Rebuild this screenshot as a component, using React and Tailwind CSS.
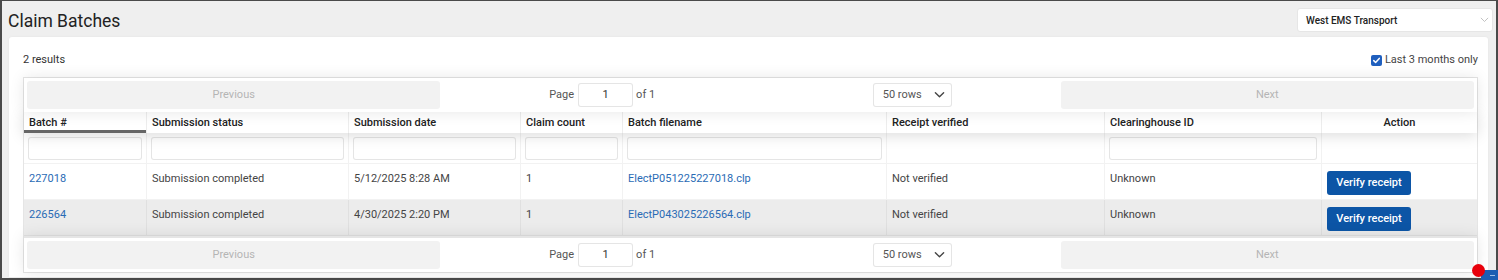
import React from "react";

const cols = [
  { key: "batch", label: "Batch #", w: "w-[123px]", filter: true },
  { key: "status", label: "Submission status", w: "w-[202px]", filter: true },
  { key: "date", label: "Submission date", w: "w-[172px]", filter: true },
  { key: "count", label: "Claim count", w: "w-[102px]", filter: true },
  { key: "file", label: "Batch filename", w: "w-[264px]", filter: true },
  { key: "receipt", label: "Receipt verified", w: "w-[218px]", filter: false },
  { key: "ch", label: "Clearinghouse ID", w: "w-[217px]", filter: true },
  { key: "action", label: "Action", w: "w-[155px]", filter: false },
];

const rows = [
  {
    batch: "227018",
    status: "Submission completed",
    date: "5/12/2025 8:28 AM",
    count: "1",
    file: "ElectP051225227018.clp",
    receipt: "Not verified",
    ch: "Unknown",
  },
  {
    batch: "226564",
    status: "Submission completed",
    date: "4/30/2025 2:20 PM",
    count: "1",
    file: "ElectP043025226564.clp",
    receipt: "Not verified",
    ch: "Unknown",
  },
];

function Chevron({ className, stroke = "#333", sw = 1.6 }) {
  return (
    <svg className={className} viewBox="0 0 12 8" fill="none">
      <path d="M1.5 1.5 L6 6 L10.5 1.5" stroke={stroke} strokeWidth={sw} strokeLinecap="round" strokeLinejoin="round" />
    </svg>
  );
}

function Pagination({ top }) {
  return (
    <div
      className={
        "flex p-[3px] bg-white relative z-10 shadow-[0_0_15px_0_rgba(0,0,0,0.1)] " +
        (top ? "h-[34px]" : "border-t-2 border-[rgba(0,0,0,0.1)] h-[36px]")
      }
    >
      <button className="flex-[2] h-[28px] rounded-[3px] bg-[#f2f2f2] text-[11px] text-[#b5b5b5] flex items-center justify-center">
        Previous
      </button>
      <div className="flex-[3] flex items-center justify-around text-[11px] text-[#555]">
        <div className="flex items-center">
          <span>Page</span>
          <div className="ml-[4px] mr-[3px] w-[55px] h-[24px] border border-[rgba(0,0,0,0.1)] rounded-[3px] bg-white flex items-center justify-center text-[#333]">
            1
          </div>
          <span>of 1</span>
        </div>
        <div className="w-[79px] h-[24px] border border-[rgba(0,0,0,0.1)] rounded-[3px] bg-white flex items-center justify-between pl-[9px] pr-[6px] text-[#555]">
          <span>50 rows</span>
          <Chevron className="w-[11px] h-[8px]" stroke="#444" sw={1.5} />
        </div>
      </div>
      <button className="flex-[2] h-[28px] rounded-[3px] bg-[#f2f2f2] text-[11px] text-[#b5b5b5] flex items-center justify-center">
        Next
      </button>
    </div>
  );
}

export default function App() {
  return (
    <div className="relative w-[1498px] h-[280px] font-['Roboto',sans-serif]">
      <div className="w-full h-full bg-[#efefef] border-t border-l-2 border-r-2 border-b-2 border-[#4a4a4a] flex flex-col">
        {/* Header bar */}
        <div className="h-[36px] flex items-center justify-between shrink-0">
          <h1 className="pl-[6px] text-[17.5px] leading-none text-[#222] pt-[5px]">Claim Batches</h1>
          <div className="mr-[3px] mt-[2px] w-[196px] h-[24px] bg-white rounded-[3px] border border-[#e6e6e6] flex items-center justify-between pl-[8px] pr-[3px]">
            <span className="text-[10px] font-medium text-[#222]">West EMS Transport</span>
            <Chevron className="w-[9px] h-[6px]" stroke="#bbb" sw={1.2} />
          </div>
        </div>

        {/* Panel */}
        <div className="ml-[7px] mr-[8px] bg-white rounded-t-[3px] pt-[15px] pl-[14px] pr-[10px] pb-[4px] shadow-[0_0_3px_rgba(0,0,0,0.05)]">
          <div className="flex items-center justify-between h-[16px] mb-[9px] text-[11px] text-[#333]">
            <span>2 results</span>
            <label className="flex items-center">
              <span className="w-[11px] h-[11px] rounded-[2px] bg-[#1f5fbe] flex items-center justify-center mr-[3px]">
                <svg viewBox="0 0 12 12" className="w-[9px] h-[9px]" fill="none">
                  <path d="M2.3 6.2 L4.8 8.6 L9.7 3.2" stroke="#fff" strokeWidth="2" strokeLinecap="round" strokeLinejoin="round" />
                </svg>
              </span>
              <span className="text-[#444]">Last 3 months only</span>
            </label>
          </div>

          {/* Table */}
          <div className="w-[1455px] border border-[rgba(0,0,0,0.1)] text-[11px]">
            <Pagination top />

            {/* Header */}
            <div className="flex h-[21px] bg-white relative z-[5] shadow-[0_2px_15px_0_rgba(0,0,0,0.15)]">
              {cols.map((c, i) => (
                <div
                  key={c.key}
                  className={
                    c.w +
                    " shrink-0 px-[5px] pt-[2px] flex items-center font-medium text-[#222] " +
                    (i < cols.length - 1 ? "border-r border-[rgba(0,0,0,0.07)] " : "") +
                    (c.key === "action" ? "justify-center " : "") +
                    (c.key === "batch" ? "shadow-[inset_0_-3px_0_0_rgba(0,0,0,0.6)]" : "")
                  }
                >
                  {c.label}
                </div>
              ))}
            </div>

            {/* Filters */}
            <div className="flex h-[31px] bg-white border-b border-[rgba(0,0,0,0.05)]">
              {cols.map((c, i) => (
                <div
                  key={c.key}
                  className={
                    c.w +
                    " shrink-0 px-[4px] pt-[4px] " +
                    (i < cols.length - 1 ? "border-r border-[rgba(0,0,0,0.05)]" : "")
                  }
                >
                  {c.filter && (
                    <div className="h-[23px] w-full bg-white border border-[rgba(0,0,0,0.1)] rounded-[3px]" />
                  )}
                </div>
              ))}
            </div>

            {/* Rows */}
            {rows.map((r, ri) => (
              <div
                key={r.batch}
                className={
                  "flex h-[36px] border-b border-[rgba(0,0,0,0.05)] " + (ri === 1 ? "bg-[#ececec]" : "bg-white")
                }
              >
                {cols.map((c, i) => (
                  <div
                    key={c.key}
                    className={
                      c.w +
                      " shrink-0 px-[5px] pt-[7px] leading-[16px] text-[#444] " +
                      (i < cols.length - 1 ? "border-r border-[rgba(0,0,0,0.05)]" : "")
                    }
                  >
                    {c.key === "action" ? (
                      <button className="w-[84px] h-[24px] rounded-[3px] bg-[#0c55a6] text-white text-[11px] font-medium flex items-center justify-center">
                        Verify receipt
                      </button>
                    ) : c.key === "batch" || c.key === "file" ? (
                      <a className="text-[#2a6bb5]">{r[c.key]}</a>
                    ) : (
                      r[c.key]
                    )}
                  </div>
                ))}
              </div>
            ))}

            <Pagination />
          </div>
        </div>
      </div>

      {/* overlays */}
      <div className="absolute left-[1472px] top-[264px] w-[13px] h-[13px] rounded-full bg-[#e8000b] z-30" />
      <div className="absolute left-[1481px] top-[270px] w-[17px] h-[10px] bg-[#1c5db3] z-20">
        <div className="absolute left-[9px] top-[5px] w-[5px] h-[1px] bg-[#9fbfe6]" />
      </div>
    </div>
  );
}
